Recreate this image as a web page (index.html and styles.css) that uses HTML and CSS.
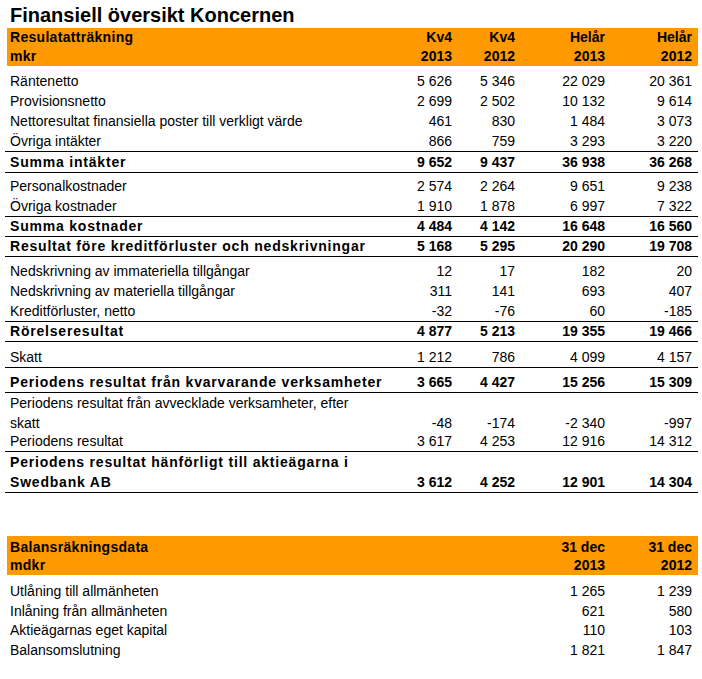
FILE: index.html
```html
<!DOCTYPE html>
<html lang="sv">
<head>
<meta charset="utf-8">
<title>Finansiell översikt Koncernen</title>
<link rel="stylesheet" href="styles.css">
</head>
<body>
<div class="page">
  <h1 class="title">Finansiell översikt Koncernen</h1>

  <section class="report">
    <div class="row head">
      <div class="label">Resulatatträkning<br>mkr</div>
      <div class="num">Kv4<br>2013</div>
      <div class="num">Kv4<br>2012</div>
      <div class="num">Helår<br>2013</div>
      <div class="num">Helår<br>2012</div>
    </div>

    <div class="group g-a">
      <div class="row"><div class="label">Räntenetto</div><div class="num">5 626</div><div class="num">5 346</div><div class="num">22 029</div><div class="num">20 361</div></div>
      <div class="row"><div class="label">Provisionsnetto</div><div class="num">2 699</div><div class="num">2 502</div><div class="num">10 132</div><div class="num">9 614</div></div>
      <div class="row"><div class="label">Nettoresultat finansiella poster till verkligt värde</div><div class="num">461</div><div class="num">830</div><div class="num">1 484</div><div class="num">3 073</div></div>
      <div class="row"><div class="label">Övriga intäkter</div><div class="num">866</div><div class="num">759</div><div class="num">3 293</div><div class="num">3 220</div></div>
    </div>
    <div class="row sum rule-top rule-bottom tall"><div class="label">Summa intäkter</div><div class="num">9 652</div><div class="num">9 437</div><div class="num">36 938</div><div class="num">36 268</div></div>

    <div class="group g-b">
      <div class="row"><div class="label">Personalkostnader</div><div class="num">2 574</div><div class="num">2 264</div><div class="num">9 651</div><div class="num">9 238</div></div>
      <div class="row"><div class="label">Övriga kostnader</div><div class="num">1 910</div><div class="num">1 878</div><div class="num">6 997</div><div class="num">7 322</div></div>
    </div>
    <div class="row sum rule-top rule-bottom"><div class="label">Summa kostnader</div><div class="num">4 484</div><div class="num">4 142</div><div class="num">16 648</div><div class="num">16 560</div></div>
    <div class="row sum rule-bottom"><div class="label">Resultat före kreditförluster och nedskrivningar</div><div class="num">5 168</div><div class="num">5 295</div><div class="num">20 290</div><div class="num">19 708</div></div>

    <div class="group g-c">
      <div class="row"><div class="label">Nedskrivning av immateriella tillgångar</div><div class="num">12</div><div class="num">17</div><div class="num">182</div><div class="num">20</div></div>
      <div class="row"><div class="label">Nedskrivning av materiella tillgångar</div><div class="num">311</div><div class="num">141</div><div class="num">693</div><div class="num">407</div></div>
      <div class="row"><div class="label">Kreditförluster, netto</div><div class="num">-32</div><div class="num">-76</div><div class="num">60</div><div class="num">-185</div></div>
    </div>
    <div class="row sum rule-top rule-bottom"><div class="label">Rörelseresultat</div><div class="num">4 877</div><div class="num">5 213</div><div class="num">19 355</div><div class="num">19 466</div></div>

    <div class="group g-d">
      <div class="row"><div class="label">Skatt</div><div class="num">1 212</div><div class="num">786</div><div class="num">4 099</div><div class="num">4 157</div></div>
    </div>
    <div class="row sum rule-top rule-bottom result"><div class="label">Periodens resultat från kvarvarande verksamheter</div><div class="num">3 665</div><div class="num">4 427</div><div class="num">15 256</div><div class="num">15 309</div></div>
    <div class="row wrap discontinued"><div class="label">Periodens resultat från avvecklade verksamheter, efter<br>skatt</div><div class="num">-48</div><div class="num">-174</div><div class="num">-2 340</div><div class="num">-997</div></div>
    <div class="row rule-bottom"><div class="label">Periodens resultat</div><div class="num">3 617</div><div class="num">4 253</div><div class="num">12 916</div><div class="num">14 312</div></div>
    <div class="row sum wrap rule-bottom owners"><div class="label">Periodens resultat hänförligt till aktieägarna i<br>Swedbank AB</div><div class="num">3 612</div><div class="num">4 252</div><div class="num">12 901</div><div class="num">14 304</div></div>
  </section>

  <section class="report balance">
    <div class="row head">
      <div class="label">Balansräkningsdata<br>mdkr</div>
      <div class="num">31 dec<br>2013</div>
      <div class="num">31 dec<br>2012</div>
    </div>
    <div class="group g-e">
      <div class="row"><div class="label">Utlåning till allmänheten</div><div class="num">1 265</div><div class="num">1 239</div></div>
      <div class="row"><div class="label">Inlåning från allmänheten</div><div class="num">621</div><div class="num">580</div></div>
      <div class="row"><div class="label">Aktieägarnas eget kapital</div><div class="num">110</div><div class="num">103</div></div>
      <div class="row"><div class="label">Balansomslutning</div><div class="num">1 821</div><div class="num">1 847</div></div>
    </div>
  </section>
</div>
</body>
</html>
```

FILE: styles.css
```css
html, body {
  margin: 0;
  padding: 0;
  background: #ffffff;
}

body {
  font-family: "Liberation Sans", Arial, sans-serif;
  font-size: 14px;
  color: #000000;
}

.page {
  padding-top: 3px;
}

.title {
  margin: 0 0 1px 10px;
  font-size: 20px;
  line-height: 24px;
  font-weight: bold;
}

.report {
  margin-left: 5px;
  width: 693px;
}

.row {
  display: grid;
  grid-template-columns: minmax(0, 1fr) 63px 63px 90px 87px;
  align-items: end;
  padding: 0 6px 0 5px;
  height: 20px;
  line-height: 20px;
  white-space: nowrap;
}

.num {
  text-align: right;
}

.head {
  background: #ff9900;
  margin-left: 2px;
  padding-left: 3px;
  height: 38px;
  line-height: 19px;
  font-weight: bold;
  align-items: start;
}

.head .label {
  letter-spacing: 0.3px;
}

.sum {
  font-weight: bold;
  height: 19px;
  line-height: 19px;
}

.sum .label {
  letter-spacing: 0.8px;
}

.sum.tall {
  height: 20px;
  line-height: 20px;
}

.rule-top {
  border-top: 1px solid #000000;
}

.rule-bottom {
  border-bottom: 1px solid #000000;
}

.g-a { margin-top: 5px; }
.g-b { margin-top: 3px; }
.g-c { margin-top: 4px; }
.g-d { margin-top: 5px; }

.result {
  height: 24px;
  line-height: 20px;
}

.wrap {
  line-height: 20px;
}

.discontinued {
  height: 38px;
}

.owners {
  height: 40px;
  line-height: 20px;
}

.balance {
  margin-top: 43px;
}

.balance .row {
  grid-template-columns: minmax(0, 1fr) 90px 87px;
}

.balance .head {
  height: 37px;
  padding-top: 2px;
  line-height: 18px;
}

.g-e { margin-top: 6px; }

.g-e .row {
  height: 19.7px;
  line-height: 20px;
}
```
